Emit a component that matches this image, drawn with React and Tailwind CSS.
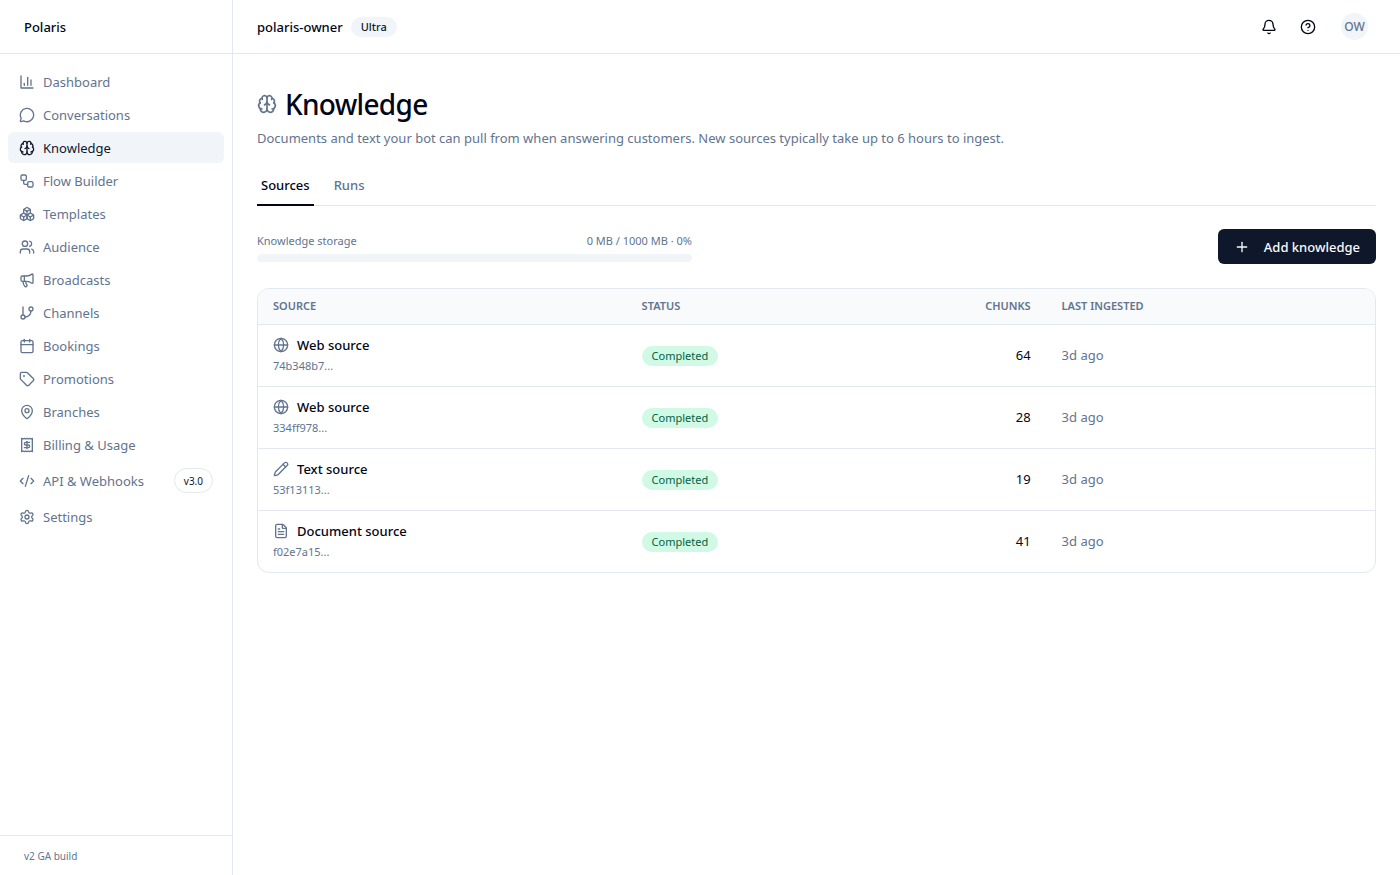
import {
  Bell,
  Boxes,
  Brain,
  Calendar,
  CircleQuestionMark,
  CodeXml,
  FileText,
  GitBranch,
  Globe,
  MapPin,
  Megaphone,
  MessageCircle,
  Pencil,
  Plus,
  Receipt,
  Settings,
  Tag,
  Users,
  Workflow,
} from 'lucide-react';

// column chart with a square axis corner
function ChartIcon({ className }) {
  return (
    <svg viewBox="0 0 24 24" fill="none" stroke="currentColor" strokeWidth="2" strokeLinecap="round" strokeLinejoin="round" className={className} aria-hidden="true">
      <path d="M3 3v18h18" />
      <path d="M18 17V9" />
      <path d="M13 17V5" />
      <path d="M8 17v-3" />
    </svg>
  );
}

const nav = [
  { label: 'Dashboard', icon: ChartIcon },
  { label: 'Conversations', icon: MessageCircle },
  { label: 'Knowledge', icon: Brain, active: true },
  { label: 'Flow Builder', icon: Workflow },
  { label: 'Templates', icon: Boxes },
  { label: 'Audience', icon: Users },
  { label: 'Broadcasts', icon: Megaphone },
  { label: 'Channels', icon: GitBranch },
  { label: 'Bookings', icon: Calendar },
  { label: 'Promotions', icon: Tag },
  { label: 'Branches', icon: MapPin },
  { label: 'Billing & Usage', icon: Receipt },
  { label: 'API & Webhooks', icon: CodeXml, badge: 'v3.0' },
  { label: 'Settings', icon: Settings },
];

const sources = [
  { id: '74b348b7...', name: 'Web source', icon: Globe, chunks: 64, ingested: '3d ago' },
  { id: '334ff978...', name: 'Web source', icon: Globe, chunks: 28, ingested: '3d ago' },
  { id: '53f13113...', name: 'Text source', icon: Pencil, chunks: 19, ingested: '3d ago' },
  { id: 'f02e7a15...', name: 'Document source', icon: FileText, chunks: 41, ingested: '3d ago' },
];

function Sidebar() {
  return (
    <aside className="flex w-[233px] shrink-0 flex-col border-r border-slate-200">
      <div className="flex h-[54px] items-center border-b border-slate-200 px-6 font-medium">Polaris</div>
      <nav className="flex flex-1 flex-col gap-[2px] px-2 py-3">
        {nav.map(({ label, icon: Icon, active, badge }) => (
          <a
            key={label}
            href="#"
            className={`flex items-center gap-2 rounded-md px-[11px] ${badge ? 'h-[37px]' : 'h-[31px]'} ${active ? 'bg-slate-100 text-slate-900' : 'text-slate-500'}`}
          >
            <Icon className="size-4 shrink-0" />
            <span className="flex-1">{label}</span>
            {badge && (
              <span className="flex h-[25px] items-center rounded-full border border-slate-200 px-[9px] text-[10px] text-slate-900">{badge}</span>
            )}
          </a>
        ))}
      </nav>
      <div className="flex h-10 items-center border-t border-slate-200 px-6 text-[10px] text-slate-500">v2 GA build</div>
    </aside>
  );
}

function Topbar() {
  return (
    <header className="flex h-[54px] shrink-0 items-center justify-between border-b border-slate-200 pr-8 pl-6">
      <div className="flex items-center gap-2">
        <span className="font-medium">polaris-owner</span>
        <span className="flex h-5 items-center rounded-full bg-slate-100 px-[10px] text-[11px] font-medium text-slate-900">Ultra</span>
      </div>
      <div className="flex items-center">
        <button type="button" aria-label="Notifications" className="grid h-8 w-[39px] place-items-center">
          <Bell className="size-4" />
        </button>
        <button type="button" aria-label="Help" className="grid h-8 w-[39px] place-items-center">
          <CircleQuestionMark className="size-4" />
        </button>
        <button type="button" className="ml-[14px] grid size-[27px] place-items-center rounded-full bg-slate-100 text-[12px] font-medium text-slate-500">
          OW
        </button>
      </div>
    </header>
  );
}

function SourcesTable() {
  return (
    <div className="mt-6 overflow-hidden rounded-xl border border-slate-200">
      <table className="w-full table-fixed">
        <thead>
          <tr className="h-[35px] bg-slate-50 text-[11px] text-slate-500 uppercase">
            <th className="w-[33%] px-[15px] text-left font-semibold">Source</th>
            <th className="w-[24%] px-[15px] text-left font-semibold">Status</th>
            <th className="px-4 text-right font-semibold">Chunks</th>
            <th className="w-[29.4%] px-[15px] text-left font-semibold">Last ingested</th>
          </tr>
        </thead>
        <tbody>
          {sources.map(({ id, name, icon: Icon, chunks, ingested }) => (
            <tr key={id} className="h-[62px] border-t border-slate-200">
              <td className="px-[15px]">
                <div className="flex items-center gap-2">
                  <Icon className="size-4 text-slate-500" />
                  <span className="font-medium">{name}</span>
                </div>
                <div className="mt-px text-[11px] leading-5 text-slate-500">{id}</div>
              </td>
              <td className="px-[15px]">
                <span className="inline-flex h-5 items-center rounded-full bg-emerald-100 px-[10px] text-[11px] text-emerald-800">Completed</span>
              </td>
              <td className="px-4 text-right">{chunks}</td>
              <td className="px-[15px] text-slate-500">{ingested}</td>
            </tr>
          ))}
        </tbody>
      </table>
    </div>
  );
}

export default function App() {
  return (
    <div className="flex min-h-screen bg-white font-['Noto_Sans','Open_Sans',sans-serif] text-[13px] leading-5 text-slate-950">
      <Sidebar />
      <div className="flex min-w-0 flex-1 flex-col">
        <Topbar />
        <main className="px-6 py-8">
          <div className="flex items-center gap-2">
            <Brain className="size-5 text-slate-500" />
            <h1 className="text-[28px] leading-9 font-medium tracking-tight">Knowledge</h1>
          </div>
          <p className="mt-[6px] text-slate-500">
            Documents and text your bot can pull from when answering customers. New sources typically take up to 6 hours to ingest.
          </p>

          <div role="tablist" className="mt-[18px] flex gap-4 border-b border-slate-200">
            <button type="button" role="tab" aria-selected="true" className="-mb-px h-10 border-b-2 border-slate-950 px-1 font-medium">
              Sources
            </button>
            <button type="button" role="tab" aria-selected="false" className="-mb-px h-10 border-b-2 border-transparent px-1 font-medium text-slate-500">
              Runs
            </button>
          </div>

          <div className="mt-[23px] flex items-center justify-between gap-4">
            <div className="w-full max-w-[435px] text-[11px] text-slate-500">
              <div className="flex justify-between">
                <span>Knowledge storage</span>
                <span>0 MB / 1000 MB · 0%</span>
              </div>
              <div className="mt-[3px] h-2 rounded-full bg-slate-100" />
            </div>
            <button type="button" className="flex h-[35px] shrink-0 items-center gap-[14px] rounded-md bg-slate-900 px-4 font-medium text-slate-50">
              <Plus className="size-4" />
              Add knowledge
            </button>
          </div>

          <SourcesTable />
        </main>
      </div>
    </div>
  );
}
